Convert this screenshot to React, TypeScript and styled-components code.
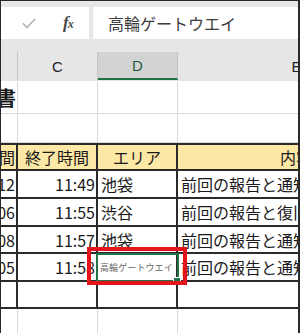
import React from 'react';
import styled, { createGlobalStyle } from 'styled-components';

const GlobalStyle = createGlobalStyle`
	html, body {
		margin: 0;
		padding: 0;
		background: #fff;
	}
	body {
		font-family: 'Noto Sans CJK JP', 'Noto Sans', sans-serif;
	}
`;

const COLS = '17px 80px 80px 238px';
const DARK = '#2a2a2a';

const Frame = styled.div`
	width: 300px;
	height: 333px;
	box-sizing: border-box;
	border-top: 1px solid ${DARK};
	border-right: 2px solid ${DARK};
	border-left: 1px solid ${DARK};
	overflow: hidden;
	background: #fff;
`;

const FormulaBar = styled.div`
	height: 39px;
	box-sizing: border-box;
	padding-top: 6px;
	display: flex;
	gap: 4px;
	background: #e7e7e7;
`;

const ToolBox = styled.div`
	width: 88px;
	height: 32px;
	background: #fff;
	display: flex;
	align-items: center;
	padding-left: 21px;
	box-sizing: border-box;
`;

const Fx = styled.span`
	margin-left: 27px;
	font-family: 'Liberation Serif', serif;
	font-style: italic;
	font-weight: 700;
	font-size: 17px;
	color: #4a4a4a;
	letter-spacing: -1px;

	small {
		font-size: 12px;
	}
`;

const FormulaInput = styled.div`
	flex: 1;
	height: 32px;
	background: #fff;
	display: flex;
	align-items: center;
	padding-left: 15px;
	font-size: 16px;
	color: #3c3c3c;
`;

const HeaderBand = styled.div`
	height: 41px;
	box-sizing: border-box;
	padding-top: 12px;
	display: grid;
	grid-template-columns: ${COLS};
	background: #e6e6e6;
`;

const ColHeader = styled.div<{ $selected?: boolean }>`
	height: 28px;
	box-sizing: border-box;
	border-right: 1px solid #c4c4c4;
	border-bottom: ${(p) => (p.$selected ? '2px solid #217346' : 'none')};
	background: ${(p) => (p.$selected ? '#d3d3d3' : 'transparent')};
	display: flex;
	align-items: center;
	justify-content: center;
	font-family: 'Liberation Sans', sans-serif;
	font-size: 15px;
	color: ${(p) => (p.$selected ? '#1f5b3d' : '#222')};
`;

const Row = styled.div<{ $h: number; $top?: boolean }>`
	display: grid;
	grid-template-columns: ${COLS};
	height: ${(p) => p.$h}px;
	box-sizing: border-box;
	border-top: ${(p) => (p.$top ? `2px solid ${DARK}` : 'none')};
`;

const Cell = styled.div<{
	$table?: boolean;
	$align?: 'left' | 'right' | 'center';
	$head?: boolean;
	$title?: boolean;
}>`
	position: relative;
	min-width: 0;
	box-sizing: border-box;
	display: flex;
	align-items: center;
	justify-content: ${(p) =>
		p.$align === 'right' ? 'flex-end' : p.$align === 'center' ? 'center' : 'flex-start'};
	padding: ${(p) => (p.$align === 'right' ? '0 1px 0 0' : p.$align === 'center' ? '0' : '0 0 0 3px')};
	white-space: nowrap;
	border-right: ${(p) => (p.$table ? `2px solid ${DARK}` : '1px solid #d9d9d9')};
	border-bottom: ${(p) => (p.$table ? `2px solid ${DARK}` : '1px solid #d9d9d9')};
	background: ${(p) => (p.$head ? '#fde8a6' : '#fff')};
	font-size: ${(p) => (p.$title ? 20 : 16)}px;
	font-weight: ${(p) => (p.$title ? 700 : 400)};
	color: #1a1a1a;
`;

const Shrunk = styled.span`
	margin-left: -1px;
	font-size: 9px;
	letter-spacing: 0.1px;
	color: #666;
`;

const Selection = styled.div`
	position: absolute;
	left: -2px;
	top: -1px;
	right: -3px;
	bottom: -2px;
	border: 2px solid #217346;
	z-index: 2;
`;

const FillHandle = styled.div`
	position: absolute;
	right: -4px;
	bottom: -4px;
	width: 6px;
	height: 6px;
	background: #217346;
	box-shadow: 0 0 0 1px #fff;
	z-index: 3;
`;

const Annotation = styled.div`
	position: absolute;
	left: -11px;
	top: -7px;
	right: -11px;
	bottom: -5px;
	border: 4px solid #e3141b;
	z-index: 4;
`;

const rows = [
	{ start: '11:12', end: '11:49', area: '池袋', memo: '前回の報告と通知の確認', h: 28 },
	{ start: '11:06', end: '11:55', area: '渋谷', memo: '前回の報告と復旧の確認', h: 28 },
	{ start: '11:08', end: '11:57', area: '池袋', memo: '前回の報告と通知の確認', h: 27 },
	{ start: '11:05', end: '11:58', area: '高輪ゲートウエイ', memo: '前回の報告と通知の確認', h: 28, selected: true },
];

const CheckIcon = () => (
	<svg width='14' height='11' viewBox='0 0 14 11' fill='none'>
		<path d='M0.8 5.2 L5 9.6 L13.2 0.8' stroke='#b3b3b3' strokeWidth='1.6' />
	</svg>
);

export default function App() {
	return (
		<>
			<GlobalStyle />
			<Frame>
				<FormulaBar>
					<ToolBox>
						<CheckIcon />
						<Fx>
							f<small>x</small>
						</Fx>
					</ToolBox>
					<FormulaInput>高輪ゲートウエイ</FormulaInput>
				</FormulaBar>

				<HeaderBand>
					<ColHeader />
					<ColHeader>C</ColHeader>
					<ColHeader $selected>D</ColHeader>
					<ColHeader>E</ColHeader>
				</HeaderBand>

				<Row $h={33}>
					<Cell $align='right' $title>
						作業報告書
					</Cell>
					<Cell />
					<Cell />
					<Cell />
				</Row>
				<Row $h={29}>
					<Cell />
					<Cell />
					<Cell />
					<Cell />
				</Row>

				<Row $h={28} $top>
					<Cell $table $head $align='right'>
						開始時間
					</Cell>
					<Cell $table $head $align='center'>
						終了時間
					</Cell>
					<Cell $table $head $align='center'>
						エリア
					</Cell>
					<Cell $table $head $align='center'>
						内容
					</Cell>
				</Row>

				{rows.map((r) => (
					<Row key={r.start} $h={r.h}>
						<Cell $table $align='right'>
							{r.start}
						</Cell>
						<Cell $table $align='right'>
							{r.end}
						</Cell>
						{r.selected ? (
							<Cell $table>
								<Shrunk>{r.area}</Shrunk>
								<Selection />
								<FillHandle />
								<Annotation />
							</Cell>
						) : (
							<Cell $table>{r.area}</Cell>
						)}
						<Cell $table>{r.memo}</Cell>
					</Row>
				))}

				<Row $h={27}>
					<Cell $table />
					<Cell $table />
					<Cell $table />
					<Cell $table />
				</Row>
				<Row $h={25}>
					<Cell />
					<Cell />
					<Cell />
					<Cell />
				</Row>
			</Frame>
		</>
	);
}
